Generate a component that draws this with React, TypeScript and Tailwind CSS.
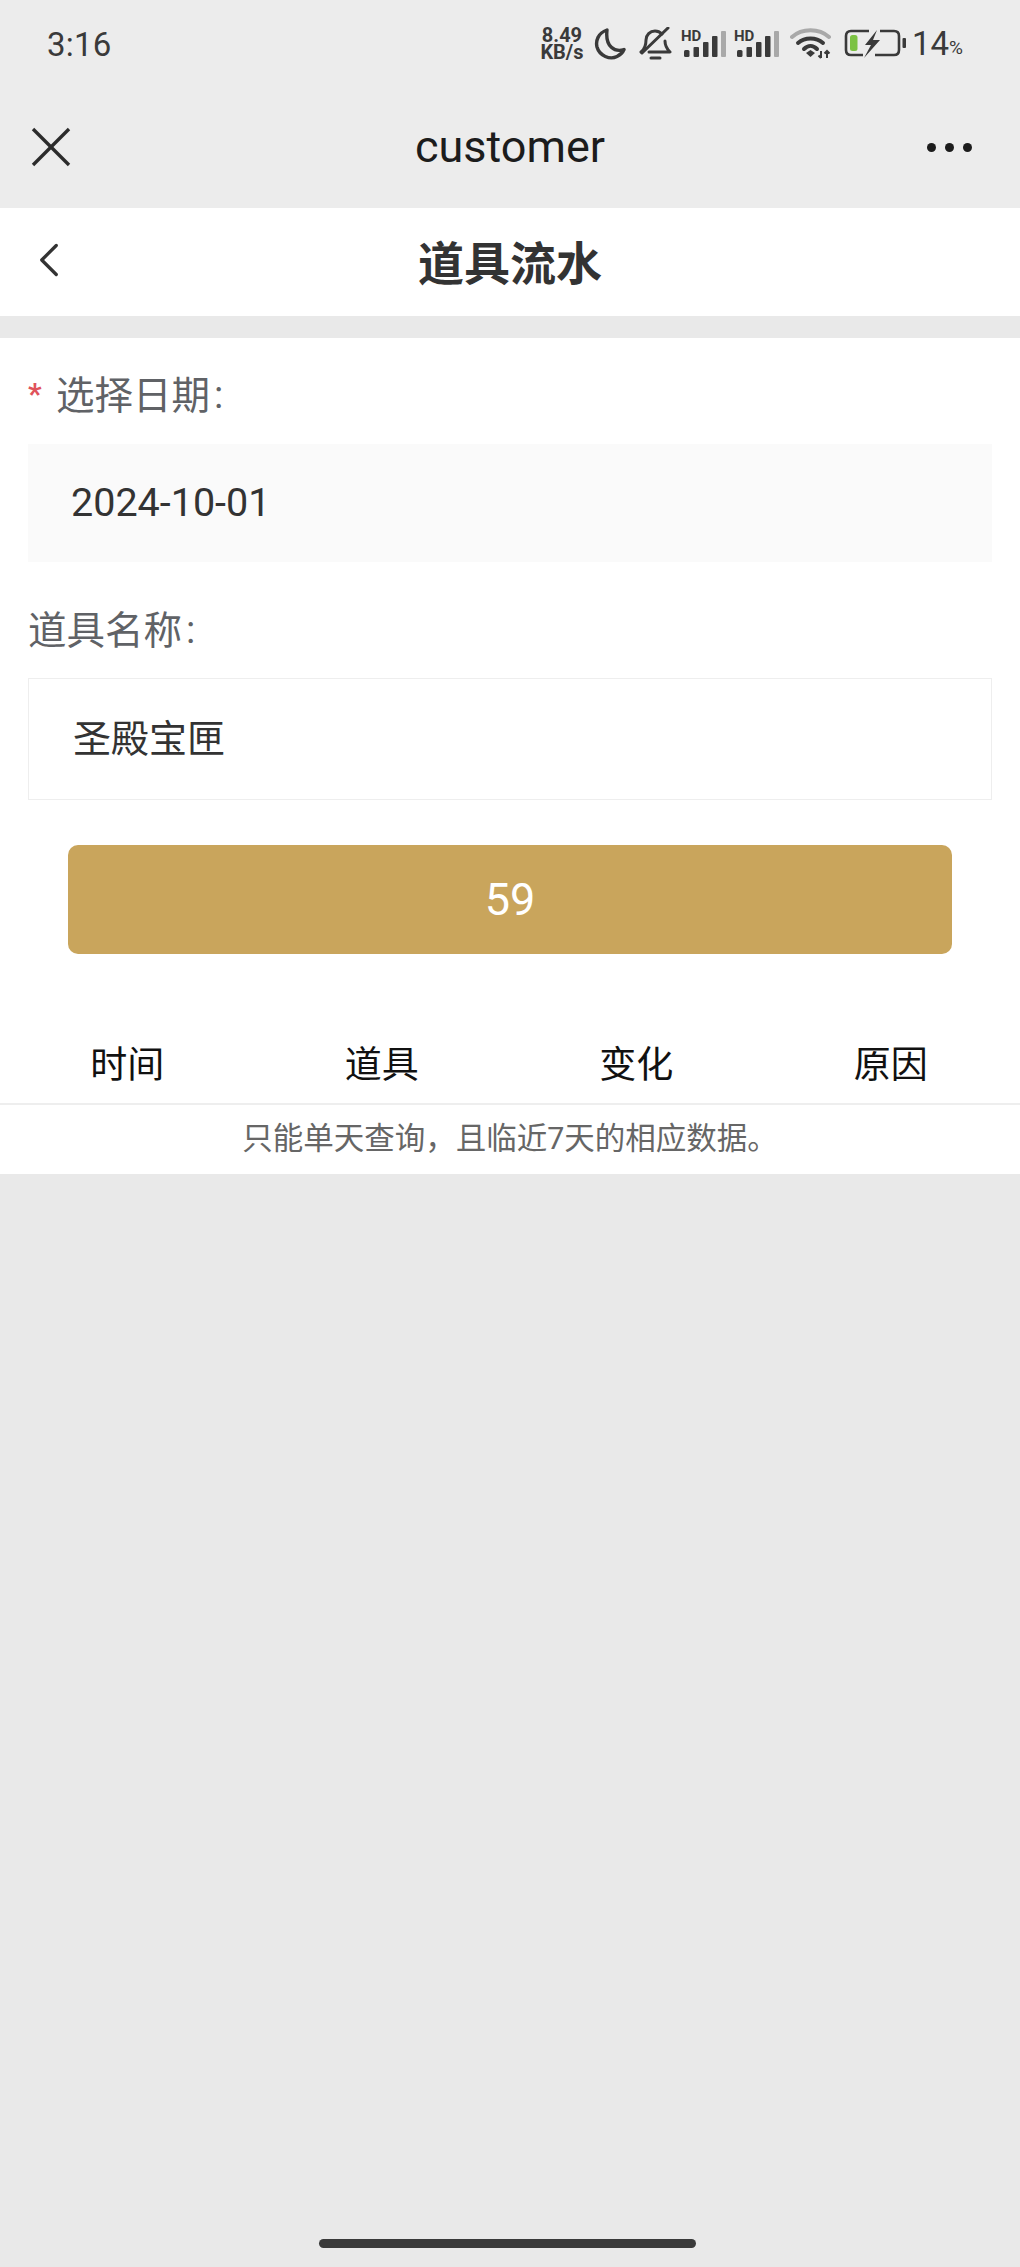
import { X, ChevronLeft } from "lucide-react";

const cjk = "font-['Roboto','Noto_Sans_CJK_SC',sans-serif]";

function Signal() {
    return (
        <svg width="45" height="32" viewBox="0 0 45 32">
            <text x="0" y="15" fontSize="15" fontWeight="700" fontFamily="Roboto, sans-serif" fill="#3a3a3a">
                HD
            </text>
            <rect x="3" y="24" width="5.5" height="7" rx="1.5" fill="#3a3a3a" />
            <rect x="12.5" y="21" width="5.5" height="10" rx="1" fill="#3a3a3a" />
            <rect x="22" y="16" width="5.5" height="15" rx="1" fill="#3a3a3a" />
            <rect x="31" y="10" width="5.5" height="21" rx="1" fill="#3a3a3a" />
            <rect x="40" y="5" width="5" height="26" rx="1" fill="#a9a9a9" />
        </svg>
    );
}

function StatusBar() {
    return (
        <div className="h-[70px] pt-[25px] pl-[47px] pr-[57px] flex justify-between items-start">
            <span className="text-[33px] leading-[40px] tracking-[0.2px] font-['Roboto',sans-serif] text-[#3a3a3a]">3:16</span>
            <div className="flex items-start -mt-[1px]">
                <div className="w-[46px] mt-[3px] text-[20px] leading-[17px] font-bold font-['Roboto',sans-serif] text-[#3a3a3a] text-center whitespace-nowrap">
                    8.49
                    <br />
                    KB/s
                </div>
                {/* do not disturb */}
                <svg className="ml-[9px] mt-[3px]" width="32" height="34" viewBox="0 0 32 34" fill="none" stroke="#3a3a3a" strokeWidth="3.4" strokeLinejoin="round">
                    <path d="M13 3 C4 6 1.5 14 3 20 C5.5 29 16 33 23 29.5 C26 28 28.5 26 30 22.5 C21 25.5 11 20 13 3 Z" />
                </svg>
                {/* muted bell */}
                <svg className="ml-[13px] mt-[3px]" width="33" height="34" viewBox="0 0 33 34" fill="none" stroke="#3a3a3a" strokeWidth="3" strokeLinecap="round" strokeLinejoin="round">
                    <path d="M2 25 C6 22 7 18 7 13 C7 8 11 4 16 4 C19 4 21 5 23 7" />
                    <path d="M26 14 C26 19 28 22 31 25 L10 25" />
                    <path d="M3 26 L29 1" />
                    <path d="M12 31 L21 31" />
                </svg>
                <div className="ml-[9px] mt-[2px]">
                    <Signal />
                </div>
                <div className="ml-[8px] mt-[2px]">
                    <Signal />
                </div>
                {/* wifi */}
                <svg className="ml-[11px] mt-[4px]" width="41" height="32" viewBox="0 0 41 32" fill="none">
                    <path d="M2 9 C12 0 29 0 39 9" stroke="#a9a9a9" strokeWidth="4" strokeLinecap="round" />
                    <path d="M8 15 C15 9 26 9 33 15" stroke="#3a3a3a" strokeWidth="4" strokeLinecap="round" />
                    <path d="M14 21 C18 17 23 17 27 21" stroke="#3a3a3a" strokeWidth="4" strokeLinecap="round" />
                    <path d="M16 25 L20.5 22 L25 25 L20.5 29 Z" fill="#3a3a3a" />
                    <path d="M31 23 V30 M28.5 27.5 L31 30 M37 23 V30 M34.5 25.5 L37 23 L39.5 25.5" stroke="#3a3a3a" strokeWidth="2" />
                </svg>
                {/* charging battery */}
                <svg className="ml-[13px] mt-[5px]" width="62" height="30" viewBox="0 0 62 30" fill="none">
                    <path d="M25 2 H7 C3.5 2 2 4 2 7 V21 C2 24 3.5 26 7 26 H19" stroke="#3a3a3a" strokeWidth="2.6" />
                    <path d="M36 2 H50 C54 2 55 4 55 7 V21 C55 24 54 26 50 26 H31" stroke="#3a3a3a" strokeWidth="2.6" />
                    <rect x="6" y="6" width="7.5" height="16" rx="2.5" fill="#7cc243" />
                    <path d="M33 1 L21 16 H27 L20 29 L36 11 H29 Z" fill="#3a3a3a" />
                    <rect x="58.5" y="9" width="3.5" height="10" rx="1" fill="#3a3a3a" />
                </svg>
                <span className="ml-[6px] text-[33px] leading-[40px] font-['Roboto',sans-serif] text-[#3a3a3a]">14</span>
                <span className="text-[19px] leading-[40px] mt-[4px] font-['Roboto',sans-serif] text-[#3a3a3a]">%</span>
            </div>
        </div>
    );
}

function WechatBar() {
    return (
        <div className="h-[138px] pt-[16px] pl-[33px] pr-[48px] flex items-center">
            <div className="flex-1 flex">
                <X size={72} strokeWidth={1.1} strokeLinecap="butt" className="-m-[18px] text-[#2b2b2b]" />
            </div>
            <span className="ml-[15px] text-[45px] leading-[54px] font-['Roboto',sans-serif] text-[#1c1c1c]">customer</span>
            <div className="flex-1 flex justify-end gap-[9px]">
                <span className="w-[9px] h-[9px] rounded-full bg-[#1c1c1c]" />
                <span className="w-[9px] h-[9px] rounded-full bg-[#1c1c1c]" />
                <span className="w-[9px] h-[9px] rounded-full bg-[#1c1c1c]" />
            </div>
        </div>
    );
}

function FieldLabel({ text, required }: { text: string; required?: boolean }) {
    return (
        <div className="flex items-center text-[38.5px] leading-[50px] text-[#606266]">
            {required && <span className="text-[#e0535b] text-[30px] font-bold w-[28px] -mt-[4px]">*</span>}
            <span>{text}</span>
            <span className="ml-[4px] -mt-[2px]">:</span>
        </div>
    );
}

export default function App() {
    return (
        <div className={`w-[1020px] h-[2267px] overflow-hidden flex flex-col bg-[#e9e9e9] ${cjk}`}>
            <div className="bg-[#ececec]">
                <StatusBar />
                <WechatBar />
            </div>

            <div className="h-[108px] bg-white flex items-center justify-center relative mb-[22px]">
                <ChevronLeft size={58} strokeWidth={1.35} className="absolute left-[20px] top-[23px] text-[#333]" />
                <h1 className="mt-[3px] text-[46px] leading-[60px] font-bold text-[#333]">道具流水</h1>
            </div>

            <div className="bg-white h-[836px] pt-[33px]">
                <div className="px-[28px]">
                    <FieldLabel text="选择日期" required />
                    <div className="mt-[23px] h-[118px] bg-[#fafafa] flex items-center pl-[43px] text-[39.5px] text-[#333]">
                        2024-10-01
                    </div>
                    <div className="mt-[44px]">
                        <FieldLabel text="道具名称" />
                    </div>
                    <div className="mt-[22px] h-[122px] bg-white border border-[#eeeeee] flex items-center pl-[44px] text-[38px] text-[#333]">
                        圣殿宝匣
                    </div>
                </div>

                <button className="block mt-[45px] mx-[68px] w-[884px] h-[109px] rounded-[10px] bg-[#c9a55c] text-white text-[45px]">
                    59
                </button>

                <div className="mt-[80px] pt-[7px] pr-[2px] grid grid-cols-4 h-[71px] border-b-2 border-[#eeeeee] text-[37px] leading-[50px] text-[#111]">
                    <div className="text-center">时间</div>
                    <div className="text-center">道具</div>
                    <div className="text-center">变化</div>
                    <div className="text-center">原因</div>
                </div>
                <p className="h-[68px] flex items-center justify-center text-[30.5px] text-[#666]">
                    只能单天查询，且临近7天的相应数据。
                </p>
            </div>

            <div className="flex-1 flex items-end justify-center pb-[19px]">
                <div className="w-[377px] h-[9px] -ml-[5px] rounded-full bg-[#3a3a3a]" />
            </div>
        </div>
    );
}
